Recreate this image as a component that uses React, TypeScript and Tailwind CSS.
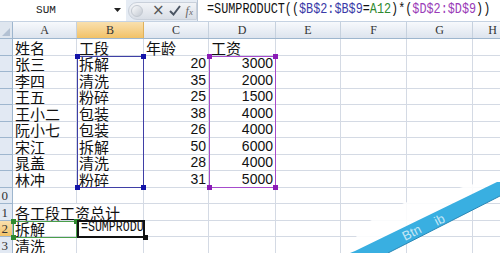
import React from 'react';

const COLS = [
  { key: 'A', width: 64 },
  { key: 'B', width: 67 },
  { key: 'C', width: 65 },
  { key: 'D', width: 67 },
  { key: 'E', width: 65 },
  { key: 'F', width: 66 },
  { key: 'G', width: 66 },
  { key: 'H', width: 40 },
];

const ROW_HEIGHT = 16.5;

type Row = { n: number; a?: string; b?: string; c?: string; d?: string };

const ROWS: Row[] = [
  { n: 1, a: '姓名', b: '工段', c: '年龄', d: '工资' },
  { n: 2, a: '张三', b: '拆解', c: '20', d: '3000' },
  { n: 3, a: '李四', b: '清洗', c: '35', d: '2000' },
  { n: 4, a: '王五', b: '粉碎', c: '25', d: '1500' },
  { n: 5, a: '王小二', b: '包装', c: '38', d: '4000' },
  { n: 6, a: '阮小七', b: '包装', c: '26', d: '4000' },
  { n: 7, a: '宋江', b: '拆解', c: '50', d: '6000' },
  { n: 8, a: '晁盖', b: '清洗', c: '28', d: '4000' },
  { n: 9, a: '林冲', b: '粉碎', c: '31', d: '5000' },
  { n: 10 },
  { n: 11, a: '各工段工资总计' },
  { n: 12, a: '拆解' },
  { n: 13, a: '清洗' },
];

const CJK = "font-['Noto_Sans_CJK_SC',sans-serif]";
const MONO = "font-['Liberation_Mono',monospace]";

function isNumber(v?: string) {
  return !!v && /^\d+$/.test(v);
}

function Cell({ value, width, noRight }: { value?: string; width: number; noRight?: boolean }) {
  const num = isNumber(value);
  return (
    <div
      className={`relative h-full shrink-0 border-b border-[#d4dae4] ${noRight ? '' : 'border-r'}`}
      style={{ width }}
    >
      {value && (
        <span
          className={`absolute bottom-0 whitespace-nowrap leading-[15px] text-[#111] ${
            num ? "right-[2px] font-['Liberation_Sans',sans-serif] text-[14px]" : `left-[2px] ${CJK} text-[15px]`
          }`}
        >
          {value}
        </span>
      )}
    </div>
  );
}

function Corner({ x, y, color }: { x: number; y: number; color: string }) {
  return (
    <div
      className="absolute h-[5px] w-[5px]"
      style={{ left: x - 2.5, top: y - 2.5, background: color }}
    />
  );
}

function Toolbar() {
  return (
    <div className="flex h-[22px] border-b border-[#c5d2e2]">
      <div className="flex w-[126px] items-center bg-white">
        <span className={`w-[92px] text-center ${MONO} text-[11px] text-[#222]`}>SUM</span>
        <svg width="8" height="5" className="ml-[22px]" viewBox="0 0 8 5">
          <path d="M0 0 L7 0 L3.5 4 Z" fill="#222" />
        </svg>
      </div>
      <div className="flex w-[71px] items-center bg-[#e6ecf4] pl-[2px]">
        <div className="flex h-[18px] flex-1 items-center rounded-l-full border border-[#c9d0da] bg-gradient-to-b from-[#f2f4f7] to-[#d9dee6] pl-[2px]">
          <div className="h-[12px] w-[12px] rounded-full border border-[#c2c8d0] bg-gradient-to-br from-[#fafbfc] to-[#c3c9d2]" />
          <span className="ml-[9px] font-['DejaVu_Sans',sans-serif] text-[15px] leading-none text-[#555]">×</span>
          <svg width="12" height="11" viewBox="0 0 12 11" className="ml-[4px]">
            <path d="M1 6 L4.5 9.5 L11 1" stroke="#4b5563" strokeWidth="2" fill="none" />
          </svg>
          <span className="ml-[5px] font-['Liberation_Serif',serif] text-[12px] italic leading-none text-[#666]">
            f<span className="text-[9px]">x</span>
          </span>
        </div>
      </div>
      <div className="flex flex-1 items-center border-l border-[#b9c6d6] bg-white pl-[9px]">
        <span className={`${MONO} inline-block scale-y-[1.2] whitespace-nowrap text-[11.8px] text-[#111]`}>
          =SUMPRODUCT((<span className="text-[#3a3aa8]">$B$2:$B$9</span>=<span className="text-[#2f8a2f]">A12</span>
          )*(<span className="text-[#9a3cb8]">$D$2:$D$9</span>))
        </span>
      </div>
    </div>
  );
}

function ColumnHeader() {
  return (
    <div className="flex h-[17px] border-b border-[#9eb6ce]">
      <div className="relative w-[13px] shrink-0 border-r border-[#9eb6ce] bg-[#dfe6ef]">
        <svg width="8" height="8" className="absolute bottom-[2px] right-[2px]" viewBox="0 0 8 8">
          <path d="M8 0 L8 8 L0 8 Z" fill="#b3c1d3" />
        </svg>
      </div>
      {COLS.map((col) => (
        <div
          key={col.key}
          className={`flex shrink-0 items-center justify-center border-r font-['Liberation_Serif',serif] text-[12px] text-[#333] ${
            col.key === 'B'
              ? 'border-[#e0b15a] bg-gradient-to-b from-[#f9e0ae] to-[#f2c266]'
              : 'border-[#c6d1de] bg-gradient-to-b from-[#f7f9fc] to-[#dde4ee]'
          }`}
          style={{ width: col.width }}
        >
          {col.key}
        </div>
      ))}
    </div>
  );
}

function RowHeader({ n }: { n: number }) {
  const active = n === 12;
  return (
    <div
      className={`relative h-full w-[13px] shrink-0 overflow-hidden border-b border-r border-[#9eb6ce] ${
        active ? 'bg-gradient-to-b from-[#f9e0ae] to-[#f2c266]' : 'bg-[#e2e9f3]'
      }`}
    >
      <span className="absolute bottom-0 right-[4px] font-['Liberation_Serif',serif] text-[13px] leading-[15px] text-[#333]">
        {n >= 10 ? String(n).slice(1) : ''}
      </span>
    </div>
  );
}

function Watermark() {
  return (
    <svg className="pointer-events-none absolute left-0 top-0" width="500" height="253" viewBox="0 0 500 253">
      <polygon
        points="474,184 500,175 500,182 497,182 360,249 352,242 368,222 404,203"
        fill="#ffffff"
        opacity="0.88"
      />
      <polygon points="355,251 497,182 500,182 500,196 388,253 350,253" fill="#39afe1" />
      <line x1="388" y1="253" x2="500" y2="196" stroke="#2a86b4" strokeWidth="1" />
      <text
        x="405"
        y="241"
        transform="rotate(-27 405 241)"
        fill="#ffffff"
        opacity="0.7"
        fontSize="13"
        fontFamily="Liberation Sans, sans-serif"
      >
        Btn
      </text>
      <text
        x="437"
        y="226"
        transform="rotate(-27 437 226)"
        fill="#ffffff"
        opacity="0.7"
        fontSize="13"
        fontFamily="Liberation Sans, sans-serif"
      >
        ib
      </text>
    </svg>
  );
}

export default function App() {
  return (
    <div className="relative h-[253px] w-[500px] overflow-hidden bg-white">
      <Toolbar />
      <ColumnHeader />
      <div className="flex flex-col">
        {ROWS.map((row) => (
          <div key={row.n} className="flex" style={{ height: ROW_HEIGHT }}>
            <RowHeader n={row.n} />
            <Cell value={row.a} width={COLS[0].width} noRight={row.n === 11} />
            <Cell value={row.b} width={COLS[1].width} />
            <Cell value={row.c} width={COLS[2].width} />
            <Cell value={row.d} width={COLS[3].width} />
            <Cell width={COLS[4].width} />
            <Cell width={COLS[5].width} />
            <Cell width={COLS[6].width} />
            <Cell width={COLS[7].width} />
          </div>
        ))}
      </div>

      {/* Range highlight: $B$2:$B$9 */}
      <div className="absolute left-[77px] top-[55.5px] h-[132px] w-[67px] border-[1.5px] border-[#3f3fa6]" />
      <Corner x={77.5} y={56} color="#1414a8" />
      <Corner x={143.5} y={56} color="#1414a8" />
      <Corner x={77.5} y={187} color="#1414a8" />
      <Corner x={143.5} y={187} color="#1414a8" />

      {/* Range highlight: $D$2:$D$9 */}
      <div className="absolute left-[209px] top-[55.5px] h-[132px] w-[67px] border-[1.5px] border-[#a64ccc]" />
      <Corner x={209.5} y={56} color="#8a1cb6" />
      <Corner x={275.5} y={56} color="#8a1cb6" />
      <Corner x={209.5} y={187} color="#8a1cb6" />
      <Corner x={275.5} y={187} color="#8a1cb6" />

      {/* Reference A12 */}
      <div className="absolute left-[13px] top-[220.5px] h-[17px] w-[64px] border-[1.5px] border-[#4a9e4a]" />
      <Corner x={13.5} y={221} color="#2f8a2f" />
      <Corner x={13.5} y={237} color="#2f8a2f" />
      <Corner x={76} y={221} color="#2f8a2f" />

      {/* Active cell B12 (editing) */}
      <div className="absolute left-[77px] top-[220px] flex h-[18px] w-[68px] items-end overflow-hidden border-2 border-[#111] bg-white pl-[2px]">
        <span className={`${MONO} inline-block origin-bottom scale-y-[1.25] whitespace-nowrap text-[11.6px] leading-[14px] text-[#111]`}>
          =SUMPRODUCT(
        </span>
      </div>
      <Corner x={145} y={237} color="#111" />

      <Watermark />
    </div>
  );
}
